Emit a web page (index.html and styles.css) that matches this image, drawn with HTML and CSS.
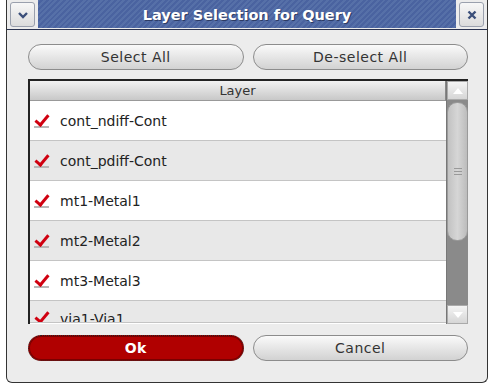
FILE: index.html
```html
<!DOCTYPE html>
<html lang="en">
<head>
  <meta charset="UTF-8">
  <title>Layer Selection for Query</title>
  <link rel="stylesheet" href="styles.css">
</head>
<body>
  <div class="window">
    <div class="titlebar">
      <span class="tbtn">
        <svg width="12" height="8" viewBox="0 0 12 8"><path d="M2 2 L6 6 L10 2" fill="none" stroke="#3b4f7a" stroke-width="2.4"/></svg>
      </span>
      <div class="title">Layer Selection for Query</div>
      <span class="tbtn">
        <svg width="10" height="10" viewBox="0 0 10 10"><path d="M1.5 1.5 L8.5 8.5 M8.5 1.5 L1.5 8.5" stroke="#3b4f7a" stroke-width="2.4"/></svg>
      </span>
    </div>
    <div class="body">
      <div class="btnrow">
        <a href="javascript:;" class="btn">Select All</a>
        <a href="javascript:;" class="btn">De-select All</a>
      </div>
      <div class="listbox">
        <div class="listmain">
          <div class="head">Layer</div>
          <ul class="list">
            <li class="item"><span class="check"></span>cont_ndiff-Cont</li>
            <li class="item alt"><span class="check"></span>cont_pdiff-Cont</li>
            <li class="item"><span class="check"></span>mt1-Metal1</li>
            <li class="item alt"><span class="check"></span>mt2-Metal2</li>
            <li class="item"><span class="check"></span>mt3-Metal3</li>
            <li class="item alt last"><span class="check"></span>via1-Via1</li>
          </ul>
        </div>
        <div class="scroll">
          <div class="arrow up"></div>
          <div class="track">
            <div class="thumb"><span class="grip"></span></div>
          </div>
          <div class="arrow down"></div>
        </div>
      </div>
      <div class="btnrow bottom">
        <a href="javascript:;" class="btn ok">Ok</a>
        <a href="javascript:;" class="btn">Cancel</a>
      </div>
    </div>
  </div>
</body>
</html>
```

FILE: styles.css
```css
*{
  box-sizing: border-box;
}

body{
  margin: 0;
  background-color: #fff;
  font-family: "DejaVu Sans", "Liberation Sans", sans-serif;
}

a{
  text-decoration: none;
}

ul{
  padding: 0;
  margin: 0;
  list-style: none;
}

.window{
  margin-left: 6px;
  width: 482px;
  height: 383px;
  border: 1px solid #333;
  border-top: none;
  border-radius: 0 0 6px 6px;
  background-color: #ececec;
  display: flex;
  flex-direction: column;
}

.titlebar{
  height: 30px;
  display: flex;
  align-items: flex-start;
  padding: 2px 3px 0 3px;
  gap: 3px;
  border-bottom: 1px solid #2a3350;
  background: #ececec;
}

.tbtn{
  width: 25px;
  height: 25px;
  border: 1px solid #9aa0ad;
  border-radius: 3px;
  background: linear-gradient(#f7f7f7, #dcdcdc);
  display: flex;
  align-items: center;
  justify-content: center;
  flex: none;
}

.title{
  flex: 1;
  height: 28px;
  margin-top: -2px;
  background: repeating-linear-gradient(135deg, #5670a8 0, #5670a8 2px, #4a63a0 2px, #4a63a0 4px);
  color: #fff;
  font-size: 14.5px;
  font-weight: bold;
  text-align: center;
  line-height: 31px;
  text-shadow: 1px 1px 0 #2d3c64;
}

.body{
  flex: 1;
  padding: 14px 19px 0 21px;
  display: flex;
  flex-direction: column;
}

.btnrow{
  display: flex;
  gap: 9px;
}

.btn{
  flex: 1;
  height: 26px;
  border: 1px solid #8c8c8c;
  border-radius: 13px;
  background: linear-gradient(#fafafa, #e2e2e2 60%, #d2d2d2);
  color: #333;
  text-align: center;
  line-height: 24px;
  font-size: 14px;
  letter-spacing: 0.5px;
}

.btn.ok{
  background: #b00000;
  border: 1px dotted #222;
  color: #fff;
  font-weight: bold;
  box-shadow: inset 0 0 0 1px #7a0000;
}

.btnrow.bottom{
  margin-top: 11px;
}

.listbox{
  margin-top: 9px;
  height: 245px;
  border-top: 2px solid #222;
  border-left: 2px solid #222;
  background-color: #fff;
  display: flex;
  overflow: hidden;
}

.listmain{
  flex: 1;
  overflow: hidden;
}

.head{
  height: 20px;
  background: linear-gradient(#f2f2f2, #c8c8c8);
  border-bottom: 1px solid #999;
  border-right: 1px solid #888;
  text-align: center;
  line-height: 20px;
  font-size: 13px;
  color: #333;
}

.item{
  height: 40px;
  border-bottom: 1px solid #c4c4c4;
  display: flex;
  align-items: center;
  padding-left: 4px;
  font-size: 14px;
  color: #222;
  background-color: #fff;
}

.item.alt{
  background-color: #e8e8e8;
}

/* last row is partly scrolled out of view */
.item.last{
  height: 22px;
  align-items: flex-start;
  padding-top: 10px;
  overflow: hidden;
  line-height: 17px;
}

.check{
  width: 15px;
  height: 14px;
  margin-right: 11px;
  border-bottom: 2px solid #b8b8b8;
  position: relative;
  flex: none;
}

.check::after{
  content: "";
  position: absolute;
  left: 4px;
  top: -2px;
  width: 5px;
  height: 11px;
  border-right: 3px solid #d00010;
  border-bottom: 3px solid #d00010;
  transform: rotate(40deg);
}

.scroll{
  width: 22px;
  display: flex;
  flex-direction: column;
  background-color: #8a8a8a;
  border-left: 1px solid #777;
}

.arrow{
  height: 19px;
  background: linear-gradient(#f4f4f4, #d6d6d6);
  border: 1px solid #aaa;
  position: relative;
}

.arrow::after{
  content: "";
  position: absolute;
  left: 5px;
  top: 6px;
  border-left: 5px solid transparent;
  border-right: 5px solid transparent;
}

.arrow.up::after{
  border-bottom: 6px solid #fff;
}

.arrow.down::after{
  border-top: 6px solid #fff;
}

.track{
  flex: 1;
  padding-top: 2px;
}

.thumb{
  height: 139px;
  border-radius: 10px;
  background: linear-gradient(90deg, #c2c2c2, #d6d6d6 50%, #bcbcbc);
  border: 1px solid #9a9a9a;
  display: flex;
  align-items: center;
  justify-content: center;
}

.grip{
  width: 8px;
  height: 7px;
  border-top: 1px solid #999;
  border-bottom: 1px solid #999;
  position: relative;
}

.grip::after{
  content: "";
  position: absolute;
  left: 0;
  right: 0;
  top: 2px;
  border-top: 1px solid #999;
}
```
